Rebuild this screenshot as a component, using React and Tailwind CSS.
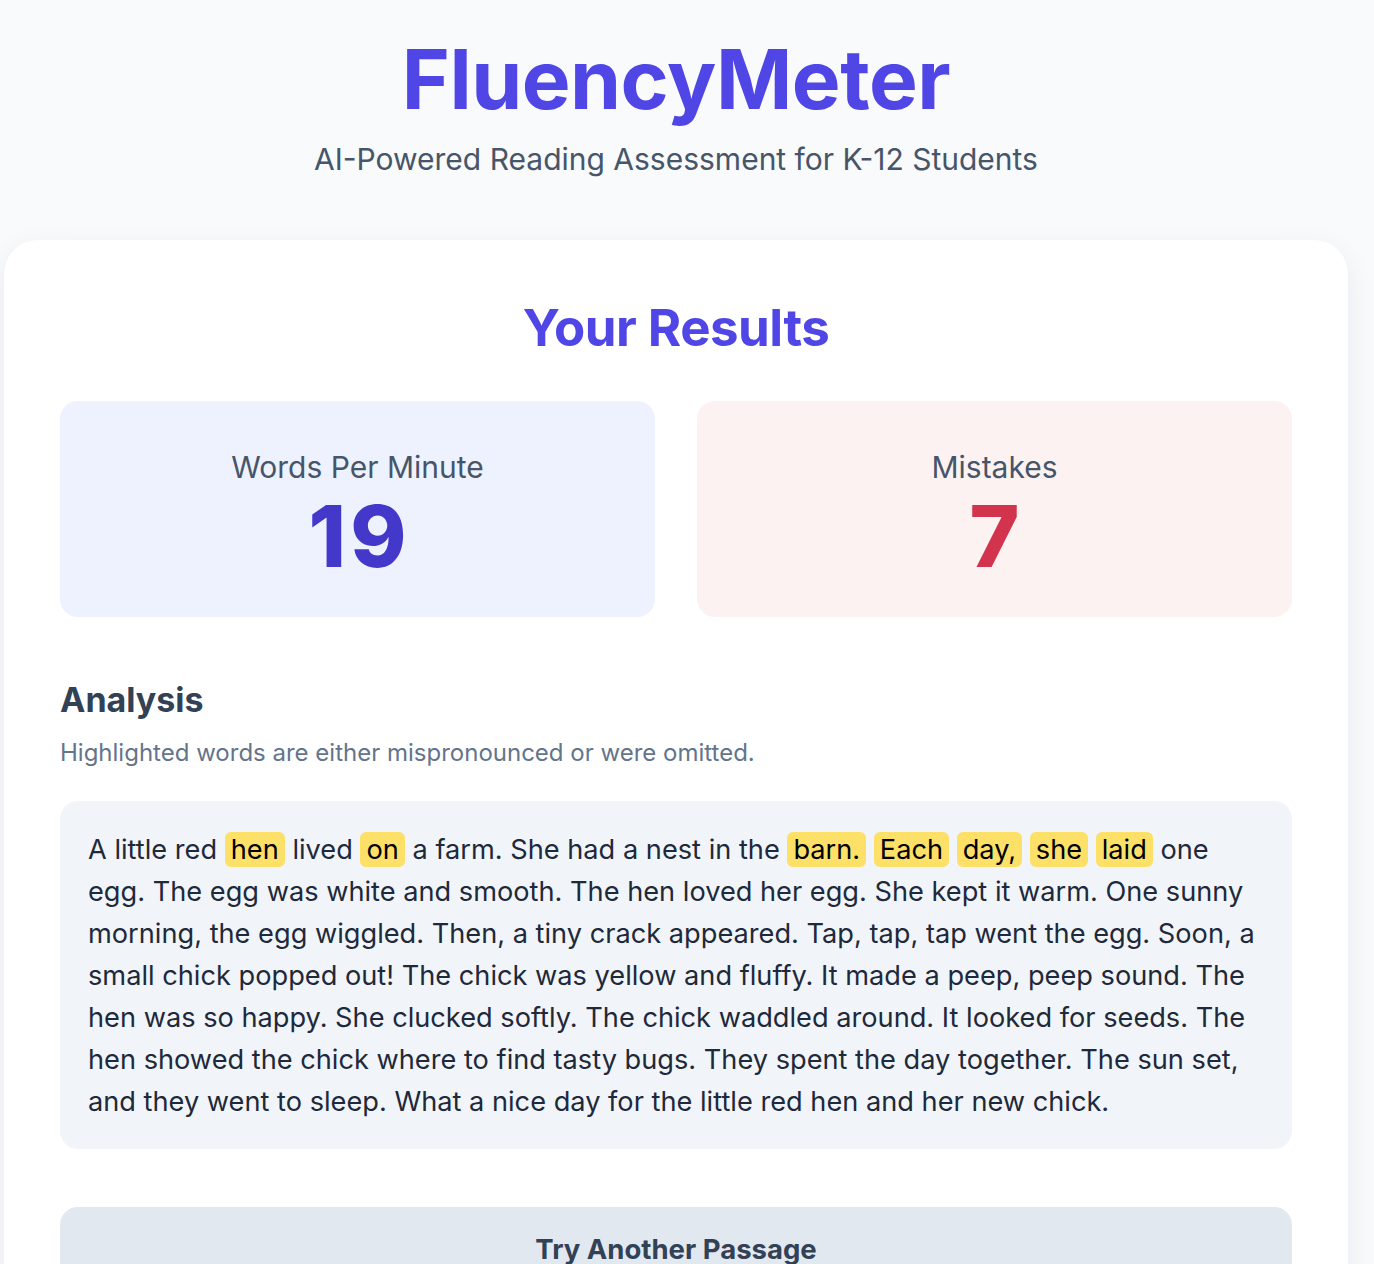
import React from 'react';

// each inner array is one visual line of the passage; [text, highlighted]
const PASSAGE = [
  [['A little red', false], ['hen', true], ['lived', false], ['on', true], ['a farm. She had a nest in the', false], ['barn.', true], ['Each', true], ['day,', true], ['she', true], ['laid', true], ['one', false]],
  [['egg. The egg was white and smooth. The hen loved her egg. She kept it warm. One sunny', false]],
  [['morning, the egg wiggled. Then, a tiny crack appeared. Tap, tap, tap went the egg. Soon, a', false]],
  [['small chick popped out! The chick was yellow and fluffy. It made a peep, peep sound. The', false]],
  [['hen was so happy. She clucked softly. The chick waddled around. It looked for seeds. The', false]],
  [['hen showed the chick where to find tasty bugs. They spent the day together. The sun set,', false]],
  [['and they went to sleep. What a nice day for the little red hen and her new chick.', false]],
];

function StatBox({ label, value, bg, color, spread }) {
  return (
    <div className={`h-[216px] rounded-[18px] ${bg} flex flex-col items-center pt-[48px]`}>
      <p className="text-[30px] leading-[36px] text-[#475569]">{label}</p>
      <p className={`mt-[9px] text-[85px] leading-[85px] font-extrabold ${color} ${spread ? 'tracking-[4px] pl-[4px]' : ''}`}>{value}</p>
    </div>
  );
}

export default function App() {
  return (
    <div className="min-h-screen bg-[#f8fafc] font-['Inter',sans-serif] overflow-hidden">
      <div className="ml-[4px] w-[1344px]">
        <header className="text-center pt-[39px]">
          <h1 className="text-[82px] leading-[82px] font-bold text-[#4f46e5] tracking-[-0.5px]">FluencyMeter</h1>
          <p className="mt-[20px] text-[30px] leading-[36px] text-[#475569]">AI-Powered Reading Assessment for K-12 Students</p>
        </header>

        <main className="mt-[63px] bg-white rounded-[34px] shadow-[0_10px_30px_rgba(15,23,42,0.07)] px-[56px] pt-[58px] pb-[56px]">
          <h2 className="text-center text-[51px] leading-[60px] font-bold text-[#4f46e5] tracking-[-0.5px]">Your Results</h2>

          <div className="grid grid-cols-2 gap-[42px] mt-[43px]">
            <StatBox label="Words Per Minute" value="19" bg="bg-[#eef2ff]" color="text-[#4338ca]" spread />
            <StatBox label="Mistakes" value="7" bg="bg-[#fdf2f2]" color="text-[#d1344c]" />
          </div>

          <h3 className="mt-[63px] text-[34px] leading-[40px] font-bold text-[#334155]">Analysis</h3>
          <p className="mt-[17px] text-[24px] leading-[32px] text-[#64748b]">Highlighted words are either mispronounced or were omitted.</p>

          <div className="mt-[32px] bg-[#f1f5f9] rounded-[18px] px-[28px] pt-[28px] pb-[26px]">
            <p className="text-[27.2px] leading-[42px] text-[#1e293b]">
              {PASSAGE.map((line, li) => (
                <React.Fragment key={li}>
                  {line.map(([t, hl], i) => (
                    <React.Fragment key={i}>
                      {hl ? (
                        <span className="bg-[#fde068] text-black rounded-[6px] px-[6px] py-[1px]">{t}</span>
                      ) : (
                        t
                      )}
                      {i < line.length - 1 ? ' ' : ''}
                    </React.Fragment>
                  ))}
                  {li < PASSAGE.length - 1 && <br />}
                </React.Fragment>
              ))}
            </p>
          </div>

          <button className="mt-[58px] w-full pt-[21px] pb-[21px] bg-[#e2e8f0] rounded-[18px] text-[27.5px] leading-[42px] font-bold text-[#334155]">
            Try Another Passage
          </button>
        </main>
      </div>
    </div>
  );
}
